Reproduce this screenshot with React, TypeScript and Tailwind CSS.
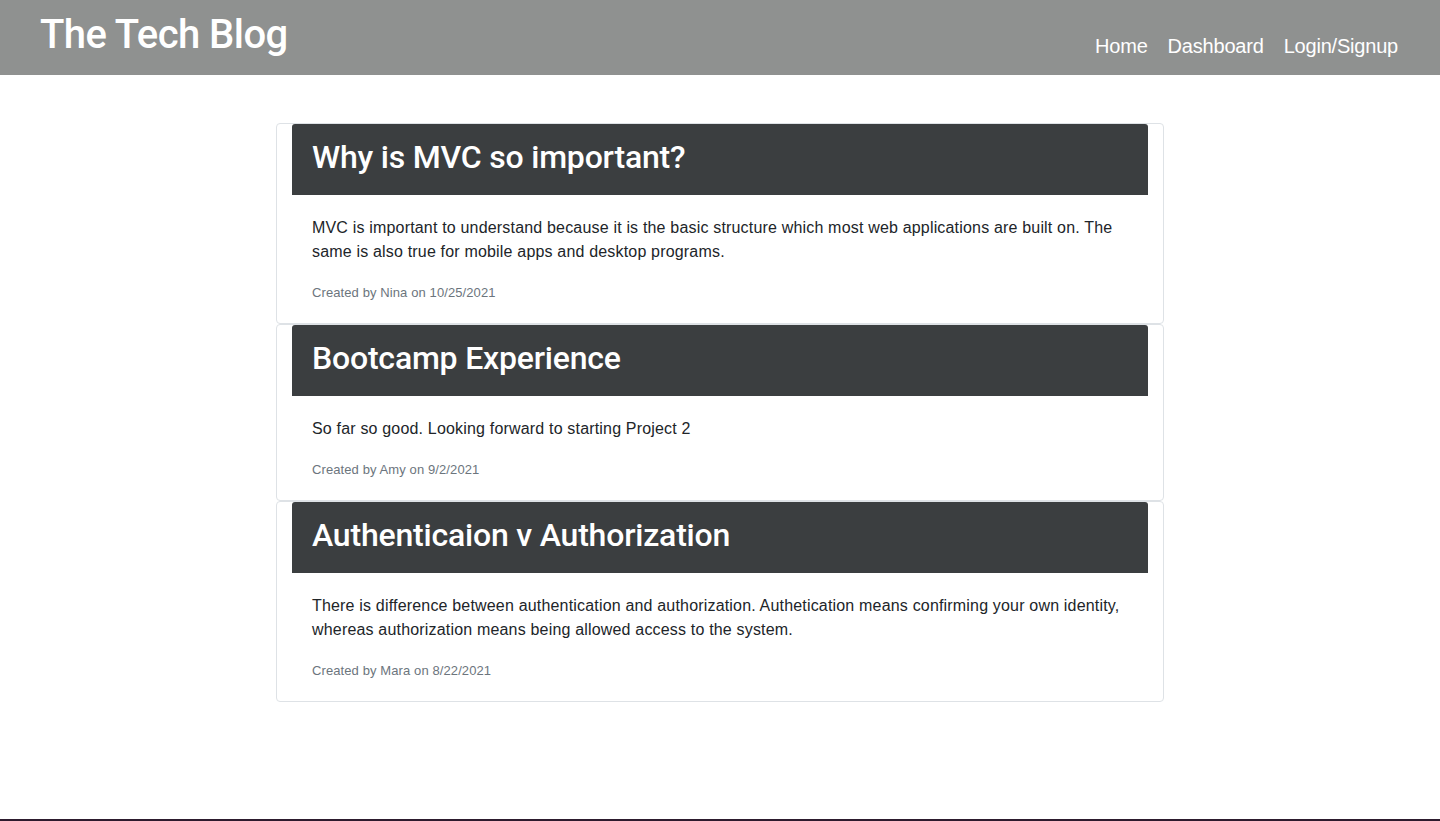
import React from 'react';

type Post = {
  title: string;
  body: string;
  author: string;
  date: string;
};

const posts: Post[] = [
  {
    title: 'Why is MVC so important?',
    body: 'MVC is important to understand because it is the basic structure which most web applications are built on. The same is also true for mobile apps and desktop programs.',
    author: 'Nina',
    date: '10/25/2021',
  },
  {
    title: 'Bootcamp Experience',
    body: 'So far so good. Looking forward to starting Project 2',
    author: 'Amy',
    date: '9/2/2021',
  },
  {
    title: 'Authenticaion v Authorization',
    body: 'There is difference between authentication and authorization. Authetication means confirming your own identity, whereas authorization means being allowed access to the system.',
    author: 'Mara',
    date: '8/22/2021',
  },
];

const headingFont = { fontFamily: 'Roboto, "Liberation Sans", Arial, sans-serif' };

const PostCard = ({ post }: { post: Post }) => (
  <div className="border border-[#dee2e6] rounded-[4px] bg-white">
    <div className="mx-[15px] bg-[#3b3e40] rounded-t-[3px] px-5 h-[71px] flex items-center pb-1">
      <h2 className="text-[32px] leading-[1.2] font-medium tracking-[-0.2px] text-white" style={headingFont}>
        {post.title}
      </h2>
    </div>
    <div className="px-[35px] pt-[21px] pb-5">
      <p className="text-base leading-6 tracking-[0.18px] text-[#212529]">{post.body}</p>
      <p className="mt-[19px] text-[13px] leading-5 tracking-[0.1px] text-[#6c757d]">
        Created by {post.author} on {post.date}
      </p>
    </div>
  </div>
);

const App = () => {
  return (
    <div
      className="min-h-screen flex flex-col bg-white"
      style={{ fontFamily: '"Liberation Sans", Arial, sans-serif' }}
    >
      <header className="h-[75px] bg-[#8f9190] flex items-start justify-between pl-10 pr-[42px]">
        <h1 className="text-[40px] leading-[1.2] font-medium tracking-[-0.55px] text-white mt-[11px]" style={headingFont}>
          The Tech Blog
        </h1>
        <nav className="flex gap-5 mt-[34px] tracking-[-0.2px]">
          <a className="text-[20px] leading-6 text-white">Home</a>
          <a className="text-[20px] leading-6 text-white">Dashboard</a>
          <a className="text-[20px] leading-6 text-white">Login/Signup</a>
        </nav>
      </header>

      <main className="flex-1 pt-12">
        <div className="w-[888px] mx-auto flex flex-col">
          {posts.map((post) => (
            <PostCard key={post.title} post={post} />
          ))}
        </div>
      </main>

      <footer className="h-[2px] bg-[#2d1b2e]" />
    </div>
  );
};

export default App;
